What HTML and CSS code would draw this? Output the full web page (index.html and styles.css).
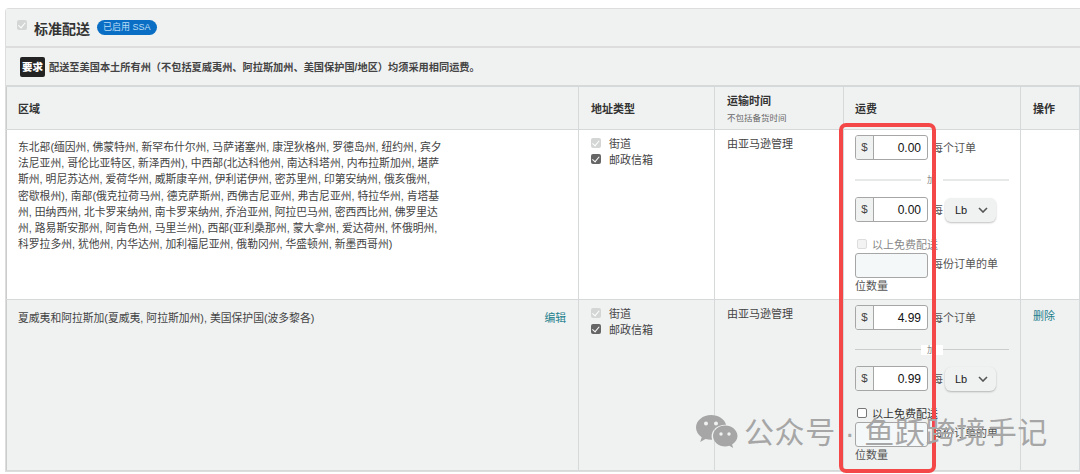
FILE: index.html
```html
<!DOCTYPE html>
<html lang="zh-CN">
<head>
<meta charset="UTF-8">
<title>标准配送</title>
<link rel="stylesheet" href="styles.css">
</head>
<body>
<div class="card">
    <div class="card-head">
        <input type="checkbox" class="chk" checked disabled>
        <h2>标准配送</h2>
        <span class="badge">已启用 SSA</span>
    </div>
    <div class="card-note">
        <b class="tag">要求</b>
        <span>配送至美国本土所有州（不包括夏威夷州、阿拉斯加州、美国保护国/地区）均须采用相同运费。</span>
    </div>
    <table>
        <thead>
            <tr>
                <th class="c-region">区域</th>
                <th class="c-type">地址类型</th>
                <th class="c-time">运输时间<small>不包括备货时间</small></th>
                <th class="c-fee">运费</th>
                <th>操作</th>
            </tr>
        </thead>
        <tbody>
            <tr>
                <td>
                    <p class="region">东北部(缅因州, 佛蒙特州, 新罕布什尔州, 马萨诸塞州, 康涅狄格州, 罗德岛州, 纽约州, 宾夕法尼亚州, 哥伦比亚特区, 新泽西州), 中西部(北达科他州, 南达科塔州, 内布拉斯加州, 堪萨斯州, 明尼苏达州, 爱荷华州, 威斯康辛州, 伊利诺伊州, 密苏里州, 印第安纳州, 俄亥俄州, 密歇根州), 南部(俄克拉荷马州, 德克萨斯州, 西佛吉尼亚州, 弗吉尼亚州, 特拉华州, 肯塔基州, 田纳西州, 北卡罗来纳州, 南卡罗来纳州, 乔治亚州, 阿拉巴马州, 密西西比州, 佛罗里达州, 路易斯安那州, 阿肯色州, 马里兰州), 西部(亚利桑那州, 蒙大拿州, 爱达荷州, 怀俄明州, 科罗拉多州, 犹他州, 内华达州, 加利福尼亚州, 俄勒冈州, 华盛顿州, 新墨西哥州)</p>
                </td>
                <td class="c-up">
                    <label class="opt"><input type="checkbox" class="chk" checked disabled>街道</label>
                    <label class="opt"><input type="checkbox" class="chk on" checked>邮政信箱</label>
                </td>
                <td class="c-up">由亚马逊管理</td>
                <td class="fee">
                    <div class="fee-line"><span class="money"><i>$</i><b>0.00</b></span><span class="unit">每个订单</span></div>
                    <div class="plus"><span>加</span></div>
                    <div class="fee-line"><span class="money"><i>$</i><b>0.00</b></span><span class="unit">每</span><span class="pick">Lb<svg width="10" height="6" viewBox="0 0 10 6"><path d="M1 1l4 4 4-4" fill="none" stroke="#555" stroke-width="1.6"/></svg></span></div>
                    <label class="free off"><input type="checkbox" class="chk" disabled>以上免费配送</label>
                    <div class="qty"><span class="blank"></span><span class="unit">每份订单的单位数量</span></div>
                </td>
                <td></td>
            </tr>
            <tr class="alt">
                <td>
                    <div class="region-row"><p>夏威夷和阿拉斯加(夏威夷, 阿拉斯加州), 美国保护国(波多黎各)</p><a href="#">编辑</a></div>
                </td>
                <td class="c-up">
                    <label class="opt"><input type="checkbox" class="chk" checked disabled>街道</label>
                    <label class="opt"><input type="checkbox" class="chk on" checked>邮政信箱</label>
                </td>
                <td class="c-up">由亚马逊管理</td>
                <td class="fee">
                    <div class="fee-line"><span class="money"><i>$</i><b>4.99</b></span><span class="unit">每个订单</span></div>
                    <div class="plus"><span>加</span></div>
                    <div class="fee-line"><span class="money"><i>$</i><b>0.99</b></span><span class="unit">每</span><span class="pick">Lb<svg width="10" height="6" viewBox="0 0 10 6"><path d="M1 1l4 4 4-4" fill="none" stroke="#555" stroke-width="1.6"/></svg></span></div>
                    <label class="free"><input type="checkbox" class="chk plain">以上免费配送</label>
                    <div class="qty"><span class="blank"></span><span class="unit">每份订单的单位数量</span></div>
                </td>
                <td class="act"><a href="#">删除</a></td>
            </tr>
        </tbody>
    </table>
</div>
<div class="redbox"></div>
<div class="mark">
    <svg width="42" height="34" viewBox="0 0 42 34">
        <path fill="#a6a6a6" d="M15 0C7 0 0 5.500 0 12.500c0 4 2.200 7.300 5.700 9.700L4.200 27l5.300-3c1.800.5 3.500.8 5.500.8h1.200c-.4-1.200-.6-2.300-.6-3.600 0-6.400 6-11.500 13.400-11.500h1.100C28.600 4 22.400 0 15 0z"/>
        <path fill="#a6a6a6" d="M41.500 21c0-5.800-5.700-10.500-12.300-10.500S17 15.200 17 21s5.600 10.500 12.200 10.500c1.400 0 2.800-.3 4.100-.7l3.900 2.200-1.100-3.600c3.200-2.100 5.400-5 5.400-8.400z"/>
        <circle cx="10" cy="8.500" r="2" fill="#f0f1f1"/><circle cx="20" cy="8.500" r="2" fill="#f0f1f1"/>
        <circle cx="25" cy="19" r="1.700" fill="#f0f1f1"/><circle cx="33" cy="19" r="1.700" fill="#f0f1f1"/>
    </svg>
    <span>公众号 · 鱼跃跨境手记</span>
</div>
</body>
</html>
```
FILE: styles.css
```css
* { box-sizing: border-box; }
html, body { height: 100%; }
body {
    margin: 0;
    height: 474px;
    overflow: hidden;
    background: #fff;
    color: #444;
    font-family: "Liberation Sans", "Noto Sans CJK SC", sans-serif;
    font-size: 11px;
    position: relative;
    padding: 8px 0 0 5px;
}
.card {
    width: 1075px;
    border: 1px solid #ddd;
    border-right: 0;
    border-radius: 4px 0 0 0;
}
.card-head {
    height: 39px;
    background: #f0f2f2;
    border-bottom: 2px solid #ddd;
    display: flex;
    align-items: center;
    padding-left: 11px;
}
.card-head .chk { margin: 0 7px 6px 0; }
.card-head h2 { margin: 0; font-size: 14px; color: #333; font-weight: 700; }
.badge {
    background: #0a6fc4;
    color: #bcdcf5;
    font-size: 9px;
    line-height: 15px;
    border-radius: 8px;
    padding: 0 6px;
    margin-left: 7px;
}
.card-note {
    height: 38px;
    background: #f0f2f2;
    border-bottom: 1px solid #d5d9d9;
    display: flex;
    align-items: center;
    font-size: 10.200px;
    font-weight: 700;
    color: #444;
    padding-left: 14px;
}
.tag {
    background: #232323;
    color: #fff;
    font-size: 10.500px;
    line-height: 20px;
    width: 25px;
    text-align: center;
    border-radius: 2px;
    margin-right: 4px;
}
table {
    width: 100%;
    border-collapse: collapse;
    table-layout: fixed;
}
th, td {
    border: 1px solid #d5d9d9;
    border-left-color: #ccc;
    text-align: left;
    vertical-align: top;
    padding: 7px 12px;
}
th {
    background: #f0f2f2;
    height: 43px;
    vertical-align: middle;
    font-size: 11px;
    color: #333;
    padding: 0 12px 1px;
}
th small { display: block; font-size: 8.500px; font-weight: 400; color: #666; margin-top: 3px; }
th:first-child, td:first-child { padding-left: 11px; }
.c-region { width: 572px; }
.c-type { width: 136px; }
.c-time { width: 129px; }
.c-fee { width: 177px; padding-left: 11px; }
td { height: 170px; }
.alt td { background: #f0f2f2; height: 171px; }
td.c-up { padding-top: 5px; }
p { margin: 0; }
.region { width: 425px; margin-top: 2px; line-height: 16.200px; font-size: 10.800px; }
.region-row { display: flex; justify-content: space-between; margin-top: 2px; font-size: 10.800px; }
a { color: #1d7f8c; text-decoration: none; }
.opt { display: flex; align-items: center; height: 16px; font-size: 11px; }
.chk {
    appearance: none;
    width: 10px;
    height: 10px;
    margin: 0 8px 0 0;
    border-radius: 2px;
    background: #d4d6d6;
    position: relative;
    flex: none;
}
.chk:checked::after {
    content: "";
    position: absolute;
    left: 3px;
    top: 1px;
    width: 3px;
    height: 5.500px;
    border: solid #fff;
    border-width: 0 1.500px 1.500px 0;
    transform: rotate(40deg);
}
.chk.on { background: #666; }
.chk.plain { background: #fff; border: 1px solid #777; }
.off .chk { background: #f3f3f3; border: 1px solid #ddd; }
td.fee { padding: 5px 12px 0 11px; }
.fee-line { display: flex; align-items: center; }
.money {
    width: 73px;
    height: 25px;
    border: 1px solid #a6a6a6;
    border-radius: 3px;
    display: flex;
    overflow: hidden;
    background: #fff;
}
.money i {
    font-style: normal;
    width: 18px;
    background: #f0f2f2;
    border-right: 1px solid #a6a6a6;
    text-align: center;
    line-height: 23px;
    font-size: 11.500px;
}
.money b {
    flex: 1;
    text-align: right;
    padding-right: 6px;
    font-weight: 400;
    line-height: 24px;
    font-size: 12px;
    color: #111;
}
.unit { margin-left: 4px; font-size: 11px; color: #555; }
.fee-line .unit { margin-bottom: 2px; }
.plus {
    margin: 19px 0 16px;
    width: 154px;
    height: 2px;
    background: #e7e9e9;
    display: flex;
    justify-content: center;
    align-items: center;
    font-size: 9px;
    color: #888;
}
.plus span { background: #fff; padding: 0 6px; width: 22px; height: 10px; line-height: 10px; }
.alt .plus { height: 1px; background: #ccc; }
.pick {
    margin-left: 2px;
    width: 51px;
    height: 24px;
    border-radius: 6px;
    background: #f0f2f2;
    box-shadow: 0 1px 2px rgba(0,0,0,.25);
    display: flex;
    align-items: center;
    justify-content: space-between;
    padding: 0 8px 0 10px;
    font-size: 11px;
    color: #222;
}
.free { display: flex; align-items: center; margin: 13px 0 0 2px; height: 17px; font-size: 11px; color: #333; }
.free .chk { margin-right: 5px; }
.free.off { color: #888; }
.qty { margin-top: 1px; line-height: 16px; }
.blank {
    display: inline-block;
    vertical-align: middle;
    width: 73px;
    height: 25px;
    border: 1px solid #a6a6a6;
    border-radius: 3px;
    background: #f5f8f8;
}
.redbox {
    position: absolute;
    left: 839px;
    top: 123px;
    width: 97px;
    height: 350px;
    border: 4px solid #f44848;
    border-radius: 7px;
}
.mark {
    position: absolute;
    left: 696px;
    top: 408px;
    display: flex;
    align-items: center;
    gap: 6px;
    color: #a6a6a6;
    font-size: 30px;
    letter-spacing: .6px;
    white-space: nowrap;
}
.mark svg { margin-top: 4px; }
```
